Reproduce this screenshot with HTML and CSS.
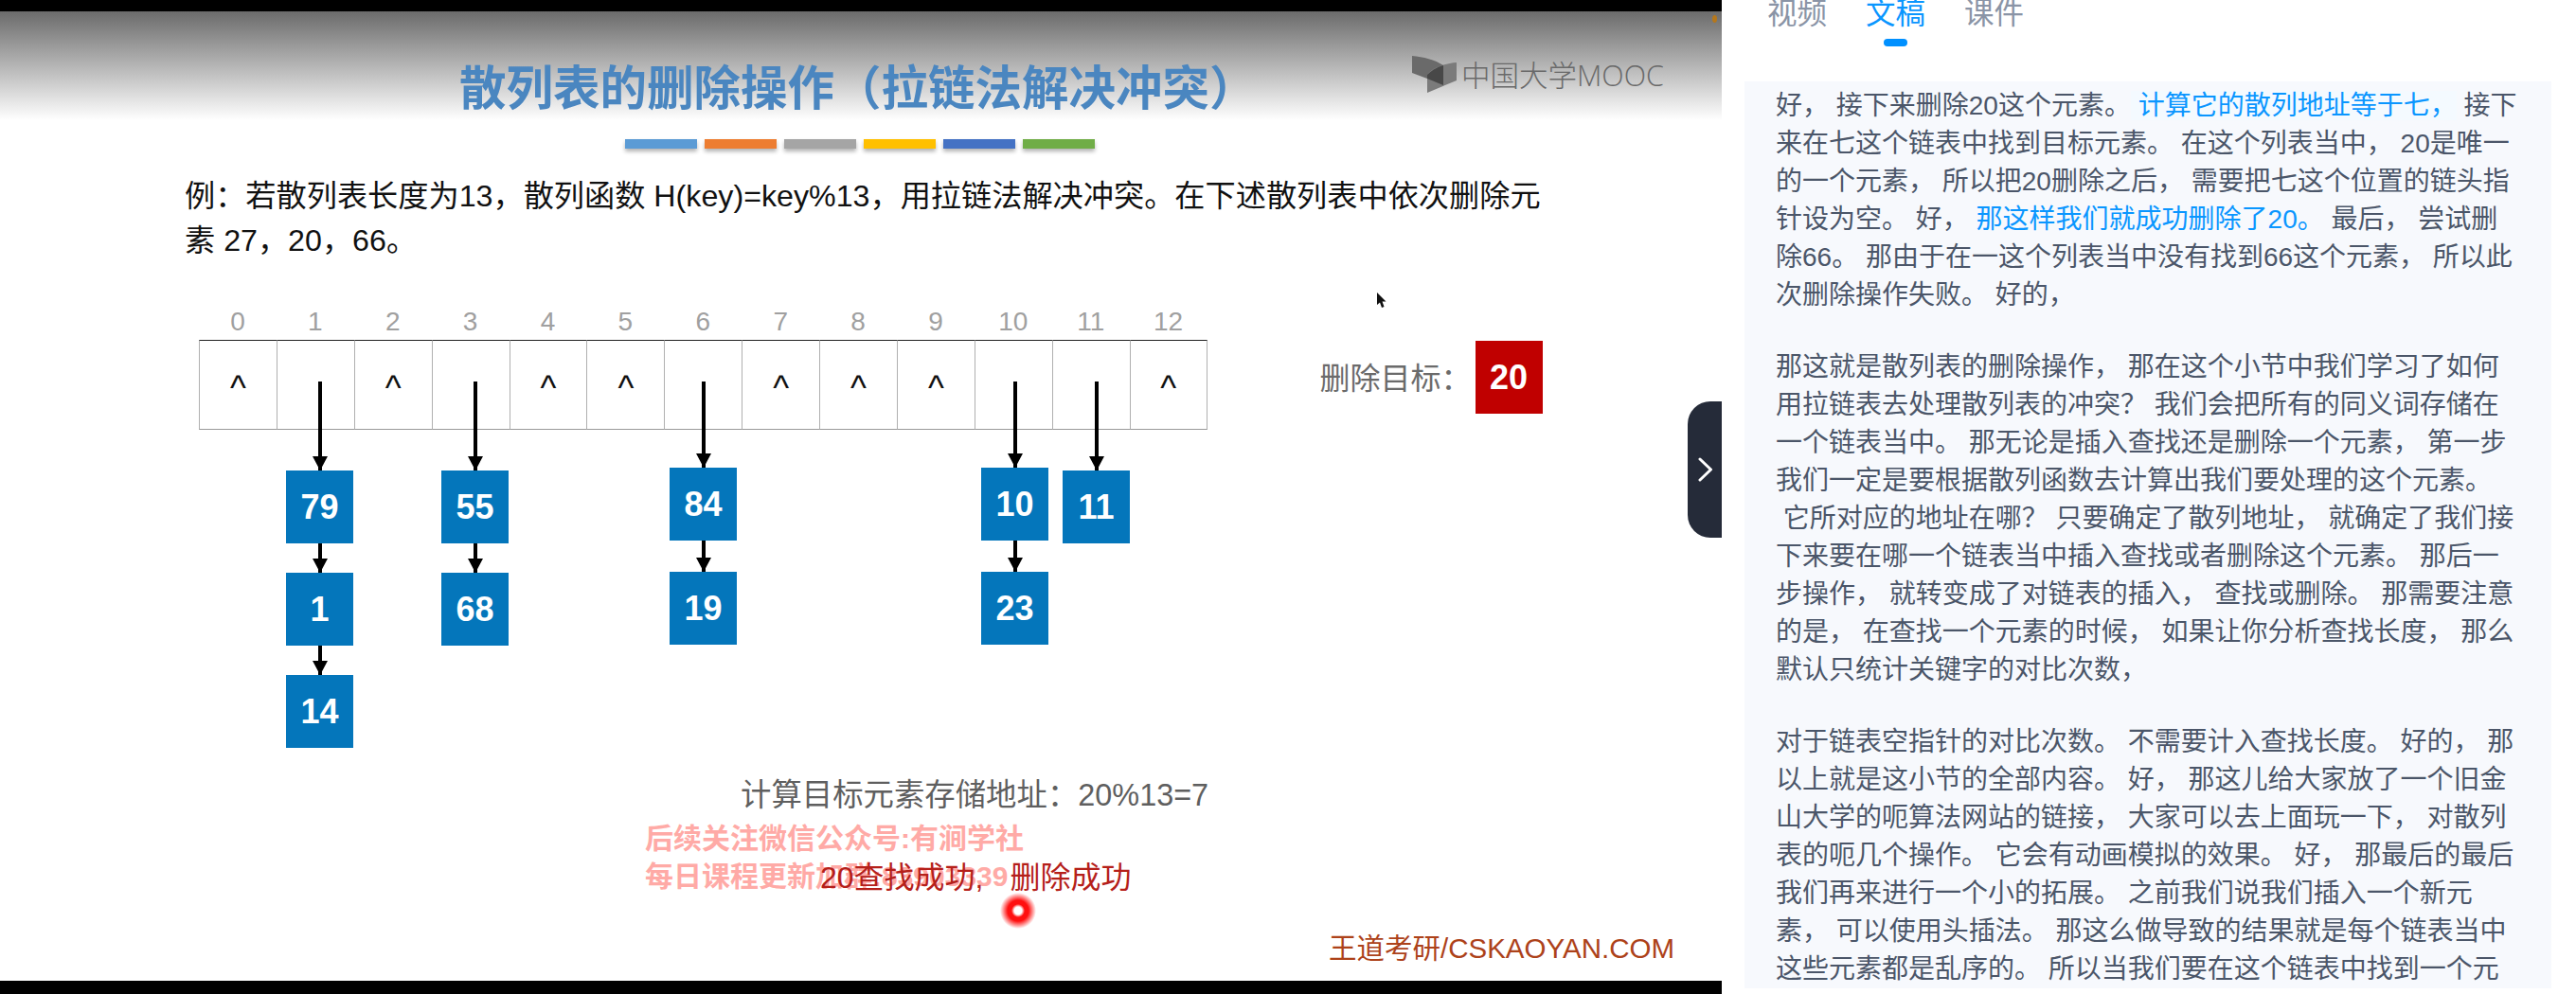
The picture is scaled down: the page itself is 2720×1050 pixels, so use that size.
FILE: index.html
```html
<!DOCTYPE html>
<html>
	<head>
		<meta charset="UTF-8">
		<title>散列表的删除操作</title>
		<link rel="stylesheet" href="styles.css">
	</head>
	<body>
		<div class="page">
			<div class="player">
				<div class="slide">
					<h1 class="slide-title">散列表的删除操作（拉链法解决冲突）</h1>
					<div class="title-bars">
						<span class="bar bar-blue"></span>
						<span class="bar bar-orange"></span>
						<span class="bar bar-gray"></span>
						<span class="bar bar-yellow"></span>
						<span class="bar bar-indigo"></span>
						<span class="bar bar-green"></span>
					</div>
					<p class="question">例：若散列表长度为13，散列函数 H(key)=key%13，用拉链法解决冲突。在下述散列表中依次删除元素 27，20，66。</p>

					<div class="table-row">
						<div class="hash-table">
							<div class="slot"><span class="idx">0</span><span class="cell">^</span></div>
							<div class="slot"><span class="idx">1</span><span class="cell"></span></div>
							<div class="slot"><span class="idx">2</span><span class="cell">^</span></div>
							<div class="slot"><span class="idx">3</span><span class="cell"></span></div>
							<div class="slot"><span class="idx">4</span><span class="cell">^</span></div>
							<div class="slot"><span class="idx">5</span><span class="cell">^</span></div>
							<div class="slot"><span class="idx">6</span><span class="cell"></span></div>
							<div class="slot"><span class="idx">7</span><span class="cell">^</span></div>
							<div class="slot"><span class="idx">8</span><span class="cell">^</span></div>
							<div class="slot"><span class="idx">9</span><span class="cell">^</span></div>
							<div class="slot"><span class="idx">10</span><span class="cell"></span></div>
							<div class="slot"><span class="idx">11</span><span class="cell"></span></div>
							<div class="slot"><span class="idx">12</span><span class="cell">^</span></div>
						</div>
						<div class="target">
							<span class="target-label">删除目标：</span>
							<span class="node node-red">20</span>
						</div>
					</div>

					<div class="calc">计算目标元素存储地址：20%13=7</div>
					<div class="brand">王道考研/CSKAOYAN.COM</div>

					<!-- 链表节点 -->
					<div class="chain chain-1">
						<i class="arrow arrow-long"></i>
						<span class="node">79</span>
						<i class="arrow arrow-short"></i>
						<span class="node">1</span>
						<i class="arrow arrow-short"></i>
						<span class="node">14</span>
					</div>
					<div class="chain chain-3">
						<i class="arrow arrow-long"></i>
						<span class="node">55</span>
						<i class="arrow arrow-short"></i>
						<span class="node">68</span>
					</div>
					<div class="chain chain-high chain-6">
						<i class="arrow arrow-long"></i>
						<span class="node">84</span>
						<i class="arrow arrow-short"></i>
						<span class="node">19</span>
					</div>
					<div class="chain chain-high chain-10">
						<i class="arrow arrow-long"></i>
						<span class="node">10</span>
						<i class="arrow arrow-short"></i>
						<span class="node">23</span>
					</div>
					<div class="chain chain-11">
						<i class="arrow arrow-long"></i>
						<span class="node">11</span>
					</div>

					<div class="logo">
						<svg class="logo-icon" width="47" height="39" viewBox="0 0 47 39">
							<path d="M0 0C12 1 24 4 33 10L33 31L16 24L0 18Z" fill="#6a6a6a"/>
							<path d="M16 20C20 13 34 8 47 7L47 26L16 39Z" fill="#7b7b7b"/>
							<path d="M16 20C20 16 26 12 33 10L33 31L16 24Z" fill="#484848"/>
						</svg>
						<span class="logo-text">中国大学MOOC</span>
					</div>

					<span class="corner-dot"></span>

					<svg class="cursor" width="10" height="17" viewBox="0 0 10 17">
						<path d="M0 0L0 13L3 10.500L5 16L7.500 15L5.500 9.500L9.500 9.500Z" fill="#111"/>
					</svg>

					<div class="watermark">后续关注微信公众号:有涧学社<br>每日课程更新加群:83903339</div>
					<div class="caption">20查找成功, 删除成功</div>
					<span class="red-dot"></span>
				</div>

				<div class="collapse-btn">
					<svg width="16" height="26" viewBox="0 0 16 26">
						<path d="M2 2L13.500 13L2 24" fill="none" stroke="#fff" stroke-width="3" stroke-linecap="round" stroke-linejoin="round"/>
					</svg>
				</div>
			</div>

			<div class="side">
				<div class="tabs">
					<span class="tab">视频</span>
					<span class="tab active">文稿</span>
					<span class="tab">课件</span>
				</div>
				<div class="script-panel">
					<p>好， 接下来删除20这个元素。<span class="hl"> 计算它的散列地址等于七，</span> 接下来在七这个链表中找到目标元素。 在这个列表当中， 20是唯一的一个元素， 所以把20删除之后， 需要把七这个位置的链头指针设为空。 好， <span class="now">那这样我们就成功删除了20。</span> 最后， 尝试删除66。 那由于在一这个列表当中没有找到66这个元素， 所以此次删除操作失败。 好的，</p>
					<p>那这就是散列表的删除操作， 那在这个小节中我们学习了如何用拉链表去处理散列表的冲突？ 我们会把所有的同义词存储在一个链表当中。 那无论是插入查找还是删除一个元素， 第一步我们一定是要根据散列函数去计算出我们要处理的这个元素。<br>&nbsp;它所对应的地址在哪？ 只要确定了散列地址， 就确定了我们接下来要在哪一个链表当中插入查找或者删除这个元素。 那后一步操作， 就转变成了对链表的插入， 查找或删除。 那需要注意的是， 在查找一个元素的时候， 如果让你分析查找长度， 那么默认只统计关键字的对比次数，</p>
					<p>对于链表空指针的对比次数。 不需要计入查找长度。 好的， 那以上就是这小节的全部内容。 好， 那这儿给大家放了一个旧金山大学的呃算法网站的链接， 大家可以去上面玩一下， 对散列表的呃几个操作。 它会有动画模拟的效果。 好， 那最后的最后我们再来进行一个小的拓展。 之前我们说我们插入一个新元素， 可以使用头插法。 那这么做导致的结果就是每个链表当中这些元素都是乱序的。 所以当我们要在这个链表中找到一个元</p>
				</div>
			</div>
		</div>
	</body>
</html>
```

FILE: styles.css
```css
*{
	box-sizing: border-box;
}
html,body{
	margin: 0;
	height: 100%;
	background: #fff;
}
body{
	font-family: "Liberation Sans", "Noto Sans CJK SC", sans-serif;
	overflow: hidden;
}
.page{
	display: flex;
	height: 1050px;
	overflow: hidden;
}

/* 左边视频 */
.player{
	position: relative;
	flex: 0 0 1818px;
	padding: 12px 0 14px;
	background: #000;
}
.slide{
	position: relative;
	height: 1024px;
	overflow: hidden;
	background: #fff linear-gradient(#6b6b6b, #fff) no-repeat;
	background-size: 100% 115px;
}
.slide-title{
	margin: 0;
	padding: 52px 0 0 485px;
	font-size: 49.500px;
	line-height: 60px;
	font-weight: bold;
	white-space: nowrap;
	color: #4a86c0;
}
.title-bars{
	display: flex;
	gap: 8px;
	margin: 23px 0 0 660px;
}
.bar{
	width: 76px;
	height: 10px;
	box-shadow: 0 3px 4px rgba(0,0,0,.3);
}
.bar-blue{ background: #5b9bd5; }
.bar-orange{ background: #ed7d31; }
.bar-gray{ background: #a5a5a5; }
.bar-yellow{ background: #ffc000; }
.bar-indigo{ background: #4472c4; }
.bar-green{ background: #70ad47; }

.question{
	width: 1440px;
	margin: 27px 0 0 195px;
	font-size: 32.200px;
	line-height: 47px;
	color: #111;
}

.table-row{
	display: flex;
	align-items: flex-end;
	gap: 119px;
	margin: 45px 0 0 210px;
}
.hash-table{
	display: grid;
	grid-template-columns: repeat(13, 81.900px);
}
.slot{
	display: flex;
	flex-direction: column;
	align-items: stretch;
}
.idx{
	height: 36px;
	font-size: 28px;
	line-height: 34px;
	text-align: center;
	color: #a0a0a0;
}
.cell{
	display: flex;
	align-items: center;
	justify-content: center;
	height: 95px;
	padding-top: 7px;
	border-top: 1px solid #222;
	border-bottom: 1px solid #999;
	border-left: 1px solid #b0b0b0;
	font-size: 36px;
	color: #111;
}
.slot:last-child .cell{
	border-right: 1px solid #b0b0b0;
}

.target{
	display: flex;
	align-items: center;
	gap: 4px;
	margin-bottom: 17px;
}
.target-label{
	margin-bottom: 3px;
	font-size: 32px;
	white-space: nowrap;
	color: #6b6b6b;
}

.node{
	display: flex;
	align-items: center;
	justify-content: center;
	flex: none;
	width: 71px;
	height: 77px;
	font-size: 36px;
	font-weight: bold;
	color: #fff;
	background: #0476bb;
}
.node-red{
	background: #c00000;
}

.calc{
	margin: 368px 0 0 782px;
	font-size: 32.400px;
	line-height: 36px;
	white-space: nowrap;
	color: #5f5f5f;
}
.brand{
	margin: 127px 0 0 1403px;
	font-size: 29.500px;
	line-height: 34px;
	white-space: nowrap;
	color: #ad421a;
}

/* 箭头和链表 */
.chain{
	position: absolute;
	top: 391px;
	display: flex;
	flex-direction: column;
	width: 71px;
}
.chain-1{ left: 302px; }
.chain-3{ left: 466px; }
.chain-6{ left: 707px; }
.chain-10{ left: 1036px; }
.chain-11{ left: 1122px; }
.arrow{
	position: relative;
	display: block;
	width: 4px;
	margin-left: 34px;
	background: #000;
}
.arrow::after{
	content: "";
	position: absolute;
	left: -6px;
	bottom: 0;
	border-left: 8px solid transparent;
	border-right: 8px solid transparent;
	border-top: 15px solid #000;
}
.arrow-long{ height: 94px; }
.arrow-short{ height: 31px; }
.chain-high .arrow-long{ height: 91px; }
.chain-high .arrow-short{ height: 33px; }

.logo{
	position: absolute;
	left: 1491px;
	top: 44px;
	display: flex;
	align-items: center;
	gap: 5px;
}
.logo-text{
	font-family: "Open Sans", "Noto Sans CJK SC", sans-serif;
	font-size: 30.500px;
	font-weight: 300;
	white-space: nowrap;
	color: #696969;
}
.corner-dot{
	position: absolute;
	left: 1808px;
	top: 4px;
	width: 5px;
	height: 8px;
	border-radius: 50%;
	background: #b5771b;
}
.cursor{
	position: absolute;
	left: 1454px;
	top: 297px;
}
.watermark{
	position: absolute;
	left: 681px;
	top: 854px;
	font-size: 30px;
	line-height: 40px;
	font-weight: bold;
	white-space: nowrap;
	color: #ffaaa6;
}
.caption{
	position: absolute;
	left: 866px;
	top: 895px;
	font-size: 32px;
	line-height: 40px;
	word-spacing: 19px;
	white-space: nowrap;
	color: #b5201a;
}
.red-dot{
	position: absolute;
	left: 1055px;
	top: 930px;
	width: 40px;
	height: 40px;
	background: radial-gradient(circle, #fff 0, #fff 4px, #ff1010 7px, #ff1010 11px, rgba(255,0,0,0) 19px);
}
.collapse-btn{
	position: absolute;
	right: 0;
	top: 424px;
	display: flex;
	align-items: center;
	justify-content: flex-start;
	width: 36px;
	height: 144px;
	padding-left: 11px;
	border-radius: 24px 0 0 24px;
	background: #252b39;
}

/* 右边文稿 */
.side{
	flex: 1;
	min-width: 0;
	overflow: hidden;
}
.tabs{
	display: flex;
	gap: 41px;
	margin-top: -6px;
	padding-left: 48px;
}
.tab{
	display: flex;
	flex-direction: column;
	align-items: center;
	gap: 7px;
	font-size: 31.500px;
	line-height: 40px;
	color: #8a94a6;
}
.tab::after{
	content: "";
	width: 25px;
	height: 8px;
	border-radius: 4px;
}
.tab.active{
	color: #0a96ff;
}
.tab.active::after{
	background: #0090ff;
}
.script-panel{
	margin: 37px 0 0 24px;
	width: 852px;
	padding: 6px 30px 0 33px;
	font-size: 28px;
	line-height: 40px;
	color: #4b5669;
	background: #f7f9fd;
}
.script-panel p{
	margin: 0 0 36px;
}
.hl{
	color: #0a96ff;
	background: #f4faff;
}
.now{
	color: #0a96ff;
}
```
